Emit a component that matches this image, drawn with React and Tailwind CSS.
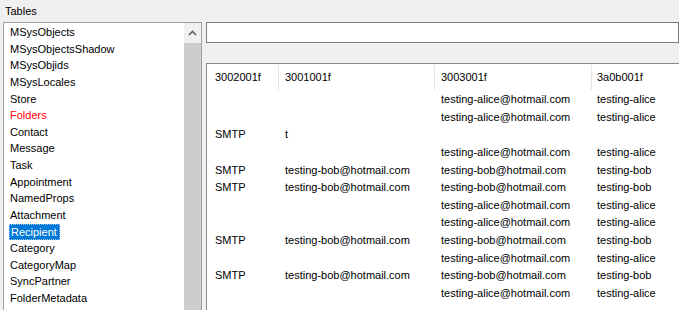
import React from "react";

const tables = [
  "MSysObjects",
  "MSysObjectsShadow",
  "MSysObjids",
  "MSysLocales",
  "Store",
  "Folders",
  "Contact",
  "Message",
  "Task",
  "Appointment",
  "NamedProps",
  "Attachment",
  "Recipient",
  "Category",
  "CategoryMap",
  "SyncPartner",
  "FolderMetadata",
];

const A = "testing-alice@hotmail.com";
const B = "testing-bob@hotmail.com";
const alice = ["", "", A, "testing-alice"];
const bob = ["SMTP", B, B, "testing-bob"];
const rows = [
  alice,
  alice,
  ["SMTP", "t", "", ""],
  alice,
  bob,
  bob,
  alice,
  alice,
  bob,
  alice,
  bob,
  alice,
];

const cols = [
  { w: "w-[72px]", pl: "pl-[8px]" },
  { w: "w-[156px]", pl: "pl-[6px]" },
  { w: "w-[157px]", pl: "pl-[6px]" },
  { w: "w-[120px]", pl: "pl-[5px]" },
];

const headers = ["3002001f", "3001001f", "3003001f", "3a0b001f"];

export default function App() {
  return (
    <div
      className="w-[679px] h-[310px] bg-[#f0f0f0] overflow-hidden text-[11px] text-black flex flex-col"
      style={{ fontFamily: '"Liberation Sans", Arial, sans-serif' }}
    >
      <div className="h-[22px] pl-[5px] pt-[4px] leading-[14px] shrink-0">Tables</div>
      <div className="flex flex-1 min-h-0 gap-[4px] pl-[3px]">
        {/* Listbox */}
        <div className="w-[199px] shrink-0 border border-[#a0a0a0] bg-white flex h-[300px]">
          <div className="flex-1 pt-[1px] pl-[5px]">
            {tables.map((t) => {
              if (t === "Recipient") {
                return (
                  <div key={t} className="h-[16.625px] flex items-center">
                    <span className="bg-[#0078d7] text-white h-[16px] leading-[14px] pl-[1px] pr-[2px] border border-dotted border-[#9cc4ec]">
                      {t}
                    </span>
                  </div>
                );
              }
              return (
                <div
                  key={t}
                  className={`h-[16.625px] leading-[16.625px] pl-[1px] ${
                    t === "Folders" ? "text-[#ff0000]" : ""
                  }`}
                >
                  {t}
                </div>
              );
            })}
          </div>
          <div className="w-[17px] shrink-0 flex flex-col bg-[#f0f0f0]">
            <div className="h-[20px] flex items-center justify-center">
              <svg width="9" height="6" viewBox="0 0 9 6">
                <path d="M1 5 L4.5 1.5 L8 5" fill="none" stroke="#606060" strokeWidth="1.6" />
              </svg>
            </div>
            <div className="flex-1 bg-[#cdcdcd]" />
          </div>
        </div>

        {/* Right panel */}
        <div className="flex-1 min-w-0 flex flex-col">
          <div className="h-[21px] shrink-0 border border-[#7a7a7a] bg-white" />
          <div className="h-[20px] shrink-0" />
          <div className="flex-1 border-l border-t border-[#8a8a8a] bg-white overflow-hidden">
            <div className="w-[600px]">
              <div className="h-[27px] flex">
                {headers.map((h, i) => (
                  <div key={h} className={`${cols[i].w} shrink-0 flex items-center justify-between`}>
                    <span className={cols[i].pl}>{h}</span>
                    <div className="w-px h-[25px] bg-[#e5e5e5]" />
                  </div>
                ))}
              </div>
              {rows.map((r, ri) => (
                <div key={ri} className="h-[17.6px] flex items-center">
                  {r.map((c, ci) => (
                    <div
                      key={ci}
                      className={`${cols[ci].w} ${cols[ci].pl} shrink-0 whitespace-nowrap leading-[17px]`}
                    >
                      {c}
                    </div>
                  ))}
                </div>
              ))}
            </div>
          </div>
        </div>
      </div>
    </div>
  );
}
